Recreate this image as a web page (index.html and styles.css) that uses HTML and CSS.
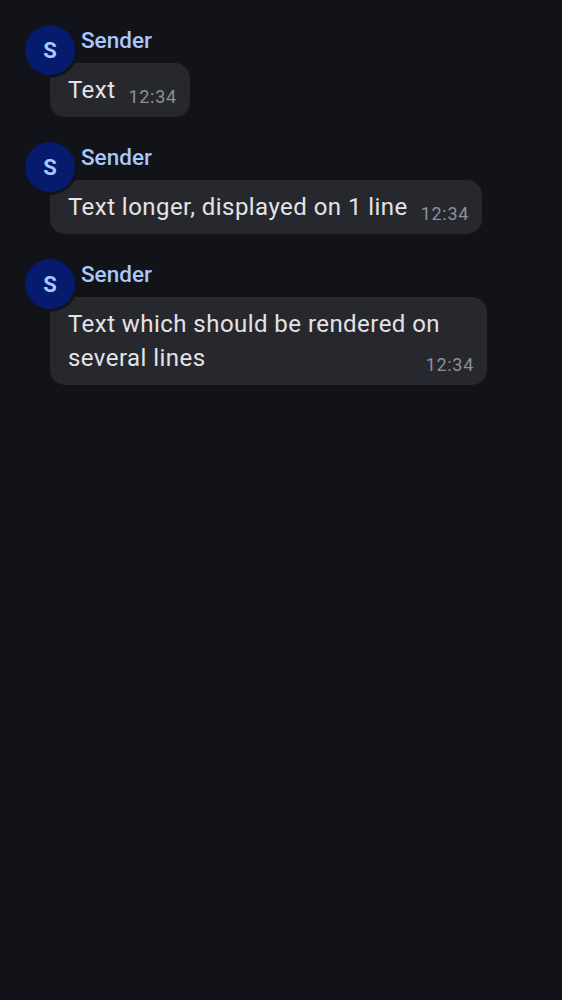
FILE: index.html
```html
<!DOCTYPE html>
<html>
<head>
<meta charset="utf-8">
<link rel="stylesheet" href="styles.css">
</head>
<body>
<div class="timeline">
  <div class="message">
    <div class="header">
      <div class="avatar">S</div>
      <div class="sender">Sender</div>
    </div>
    <div class="bubble"><span class="text">Text</span><span class="time">12:34</span></div>
  </div>
  <div class="message">
    <div class="header">
      <div class="avatar">S</div>
      <div class="sender">Sender</div>
    </div>
    <div class="bubble"><span class="text">Text longer, displayed on 1 line</span><span class="time">12:34</span></div>
  </div>
  <div class="message">
    <div class="header">
      <div class="avatar">S</div>
      <div class="sender">Sender</div>
    </div>
    <div class="bubble"><span class="text">Text which should be rendered on several lines</span><span class="time">12:34</span></div>
  </div>
</div>
</body>
</html>
```
FILE: styles.css
```css
html, body {
  margin: 0;
  padding: 0;
  background: #111318;
  height: 100%;
}
body {
  font-family: Roboto, "Noto Sans", sans-serif;
  color: #e3e3e8;
}
.timeline {
  display: flex;
  flex-direction: column;
  gap: 25px;
  padding: 25px 0 0 50px;
}
.message {
  display: flex;
  flex-direction: column;
  align-items: flex-start;
}
.header {
  display: flex;
  align-items: flex-start;
  gap: 6px;
  margin-left: -25px;
  margin-bottom: -12px;
  position: relative;
  z-index: 1;
}
.avatar {
  width: 50px;
  height: 50px;
  border-radius: 50%;
  background: #061a6e;
  color: #a8c7fa;
  font-size: 22px;
  font-weight: 700;
  display: flex;
  align-items: center;
  justify-content: center;
  box-shadow: 0 0 0 3px #111318;
}
.sender {
  margin-top: 3px;
  font-size: 22.5px;
  line-height: 25px;
  font-weight: 500;
  color: #a8c7fa;
}
.bubble {
  display: flow-root;
  box-sizing: border-box;
  max-width: 437px;
  background: #27282d;
  border-radius: 15px;
  padding: 10px 13px 10px 18px;
  font-size: 24px;
  line-height: 34px;
  letter-spacing: 0.45px;
}
.time {
  float: right;
  margin: 14px 0 0 13px;
  font-size: 18px;
  line-height: 20px;
  color: #8d9099;
  letter-spacing: 0.7px;
}
```
